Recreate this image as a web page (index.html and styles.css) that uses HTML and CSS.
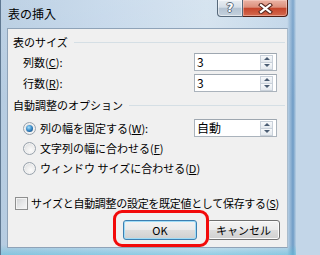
FILE: index.html
```html
<!DOCTYPE html>
<html lang="ja">
<head>
<meta charset="utf-8">
<title>表の挿入</title>
<link rel="stylesheet" href="styles.css">
</head>
<body>
<div class="window">
  <div class="titlebar">
    <span class="title">表の挿入</span>
    <div class="caption">
      <div class="cap-btn cap-help"><span class="help-glyph">?</span></div>
      <div class="cap-btn cap-close">
        <svg width="15" height="11" viewBox="0 0 15 11">
          <path d="M3 2 L12 9 M12 2 L3 9" stroke="#5a2a22" stroke-width="4.2" stroke-linecap="square" fill="none"/>
          <path d="M3 2 L12 9 M12 2 L3 9" stroke="#ffffff" stroke-width="2.2" stroke-linecap="square" fill="none"/>
        </svg>
      </div>
    </div>
  </div>
  <div class="client">
    <div class="group-head"><span>表のサイズ</span><div class="rule"></div></div>
    <div class="field-row first">
      <span class="label">列数(<u>C</u>):</span>
      <div class="spin"><span class="spin-value">3</span><div class="spin-btns"><div class="spin-up"></div><div class="spin-down"></div></div></div>
    </div>
    <div class="field-row">
      <span class="label">行数(<u>R</u>):</span>
      <div class="spin"><span class="spin-value">3</span><div class="spin-btns"><div class="spin-up"></div><div class="spin-down"></div></div></div>
    </div>
    <div class="group-head second"><span>自動調整のオプション</span><div class="rule"></div></div>
    <div class="radio-group">
      <div class="radio-row">
        <span class="radio checked"></span>
        <span class="radio-label">列の幅を固定する(<u>W</u>):</span>
        <div class="spin"><span class="spin-value">自動</span><div class="spin-btns"><div class="spin-up"></div><div class="spin-down"></div></div></div>
      </div>
      <div class="radio-row">
        <span class="radio"></span>
        <span class="radio-label">文字列の幅に合わせる(<u>F</u>)</span>
      </div>
      <div class="radio-row">
        <span class="radio"></span>
        <span class="radio-label">ウィンドウ サイズに合わせる(<u>D</u>)</span>
      </div>
    </div>
    <div class="check-row">
      <span class="check"></span>
      <span class="check-label">サイズと自動調整の設定を既定値として保存する(<u>S</u>)</span>
    </div>
    <div class="button-row">
      <div class="btn-wrap">
        <div class="btn btn-default">OK</div>
        <div class="callout"></div>
      </div>
      <div class="btn btn-cancel">キャンセル</div>
    </div>
  </div>
</div>
</body>
</html>
```

FILE: styles.css
```css
* { box-sizing: border-box; }
html {
  margin: 0;
  padding: 0;
  background: #c3d6e8;
}
body {
  margin: 0;
  padding: 0;
  width: 296px;
  height: 255px;
  overflow: hidden;
  font-family: "Noto Sans CJK JP", "Noto Sans", sans-serif;
  font-size: 11px;
  color: #000;
  background: #c3d6e8;
}
.window {
  width: 296px;
  height: 255px;
  display: flex;
  flex-direction: column;
  padding: 0 8px 7px 6px;
  border-left: 1px solid #5f7891;
  background:
    linear-gradient(180deg, rgba(255,255,255,0.10) 0%, rgba(255,255,255,0) 40%, rgba(120,200,230,0) 96%, rgba(90,190,220,0.55) 100%),
    linear-gradient(90deg, #b6cce1 0%, #c4d7ea 35%, #d2e1ee 70%, #c0d5e8 97%, #6f9cc6 99%, #b8cfe4 100%);
}
.titlebar {
  height: 28px;
  flex: none;
  display: flex;
  align-items: flex-start;
}
.title {
  font-size: 12px;
  line-height: 16px;
  padding: 6px 0 0 1px;
  color: #000;
}
.caption {
  margin-left: auto;
  display: flex;
}
.cap-btn {
  height: 17px;
  display: flex;
  align-items: center;
  justify-content: center;
}
.cap-help {
  width: 26px;
  border: 1px solid #56687a;
  border-top: none;
  border-radius: 0 0 0 4px;
  background: linear-gradient(180deg, #e9eef3 0%, #d5dee7 45%, #b4c3d2 52%, #c4d1dd 100%);
  box-shadow: inset 0 0 0 1px rgba(255,255,255,0.5);
}
.help-glyph {
  font-family: "DejaVu Sans", sans-serif;
  font-weight: bold;
  font-size: 12px;
  line-height: 14px;
  color: #fff;
  text-shadow: -1px 0 #5b6b7b, 1px 0 #5b6b7b, 0 -1px #5b6b7b, 0 1px #5b6b7b;
}
.cap-close {
  width: 45px;
  border: 1px solid #4e1d14;
  border-top: none;
  border-left: none;
  border-radius: 0 0 4px 0;
  background: linear-gradient(180deg, #ebb4a6 0%, #dc8f7b 45%, #c5452b 52%, #d46a4f 100%);
  box-shadow: inset 0 0 0 1px rgba(255,220,210,0.45);
}
.client {
  flex: 1;
  display: flex;
  flex-direction: column;
  border: 1px solid #8fa3b8;
  border-right-color: #a9bccd;
  background: #f0f0f0;
  padding: 6px 10px 7px 5px;
}
.group-head {
  height: 14px;
  line-height: 14px;
  display: flex;
  align-items: center;
  flex: none;
}
.group-head.second { margin-top: 6px; }
.rule {
  flex: 1;
  height: 1px;
  background: #d5dfe5;
  margin-left: 6px;
  margin-right: -8px;
}
.field-row {
  height: 18px;
  display: flex;
  align-items: center;
  margin-top: 3px;
  flex: none;
}
.field-row.first { margin-top: 4px; }
.label {
  padding-left: 10px;
  line-height: 14px;
}
u { text-decoration: underline; text-underline-offset: 1px; }
.spin {
  margin-left: auto;
  width: 83px;
  height: 18px;
  display: flex;
  align-items: center;
  border: 1px solid #aab3bc;
  border-top-color: #9ea7b0;
  background: #fff;
  padding: 0 3px 0 2px;
}
.spin-value {
  flex: 1;
  font-size: 12px;
  line-height: 16px;
}
.spin-btns {
  width: 13px;
  height: 15px;
  display: flex;
  flex-direction: column;
}
.spin-up, .spin-down {
  flex: 1;
  display: flex;
  align-items: center;
  justify-content: center;
  border: 1px solid #c9d1da;
  background: linear-gradient(180deg, #f7f9fb, #e4e9ee);
}
.spin-down { border-top: none; }
.spin-up::after {
  content: "";
  border-left: 3px solid transparent;
  border-right: 3px solid transparent;
  border-bottom: 3px solid #4b5d73;
}
.spin-down::after {
  content: "";
  border-left: 3px solid transparent;
  border-right: 3px solid transparent;
  border-top: 3px solid #4b5d73;
}
.radio-group {
  margin-top: 6px;
  display: flex;
  flex-direction: column;
  flex: none;
}
.radio-row {
  height: 20px;
  display: flex;
  align-items: center;
}
.radio {
  width: 13px;
  height: 13px;
  margin-left: 10px;
  border-radius: 50%;
  border: 1px solid #98a2ac;
  background: radial-gradient(circle at 60% 65%, #fbfbfb 0%, #ececec 45%, #cfd3d7 100%);
  box-shadow: inset 0 0 0 1px #f3f3f3;
  display: flex;
  align-items: center;
  justify-content: center;
  flex: none;
}
.radio.checked::after {
  content: "";
  width: 7px;
  height: 7px;
  border-radius: 50%;
  background: radial-gradient(circle at 40% 35%, #a6e0fb 0%, #3f8fcb 45%, #154f86 85%, #0d3b66 100%);
}
.radio-label {
  margin-left: 4px;
  line-height: 14px;
}
.check-row {
  margin-top: 18px;
  height: 14px;
  display: flex;
  align-items: center;
  flex: none;
}
.check {
  width: 13px;
  height: 13px;
  margin-left: 2px;
  border: 1px solid #8e8f8f;
  background: linear-gradient(135deg, #cfd1d3 0%, #e6e7e8 50%, #f8f8f8 100%);
  box-shadow: inset 0 0 0 1px #f4f4f4;
  flex: none;
}
.check-label {
  margin-left: 3px;
  line-height: 14px;
  white-space: nowrap;
  letter-spacing: -0.3px;
}
.button-row {
  margin-top: 10px;
  height: 20px;
  display: flex;
  justify-content: flex-end;
  gap: 10px;
  margin-right: -3px;
  flex: none;
}
.btn-wrap {
  position: relative;
}
.btn {
  height: 20px;
  display: flex;
  align-items: center;
  justify-content: center;
  border: 1px solid #707070;
  border-radius: 3px;
  background: linear-gradient(180deg, #f3f3f3 0%, #ebebeb 48%, #dddddd 52%, #cfcfcf 100%);
  box-shadow: inset 0 0 0 1px #fbfbfb;
  line-height: 14px;
  font-size: 11px;
}
.btn-default {
  width: 74px;
  border-color: #3c7fb1;
  box-shadow: inset 0 0 0 1px #9fdcf7;
}
.btn-cancel {
  width: 73px;
}
.callout {
  position: absolute;
  left: -10px;
  top: -10px;
  width: 96px;
  height: 37px;
  border: 3px solid #f20a0a;
  border-radius: 9px;
}
```
